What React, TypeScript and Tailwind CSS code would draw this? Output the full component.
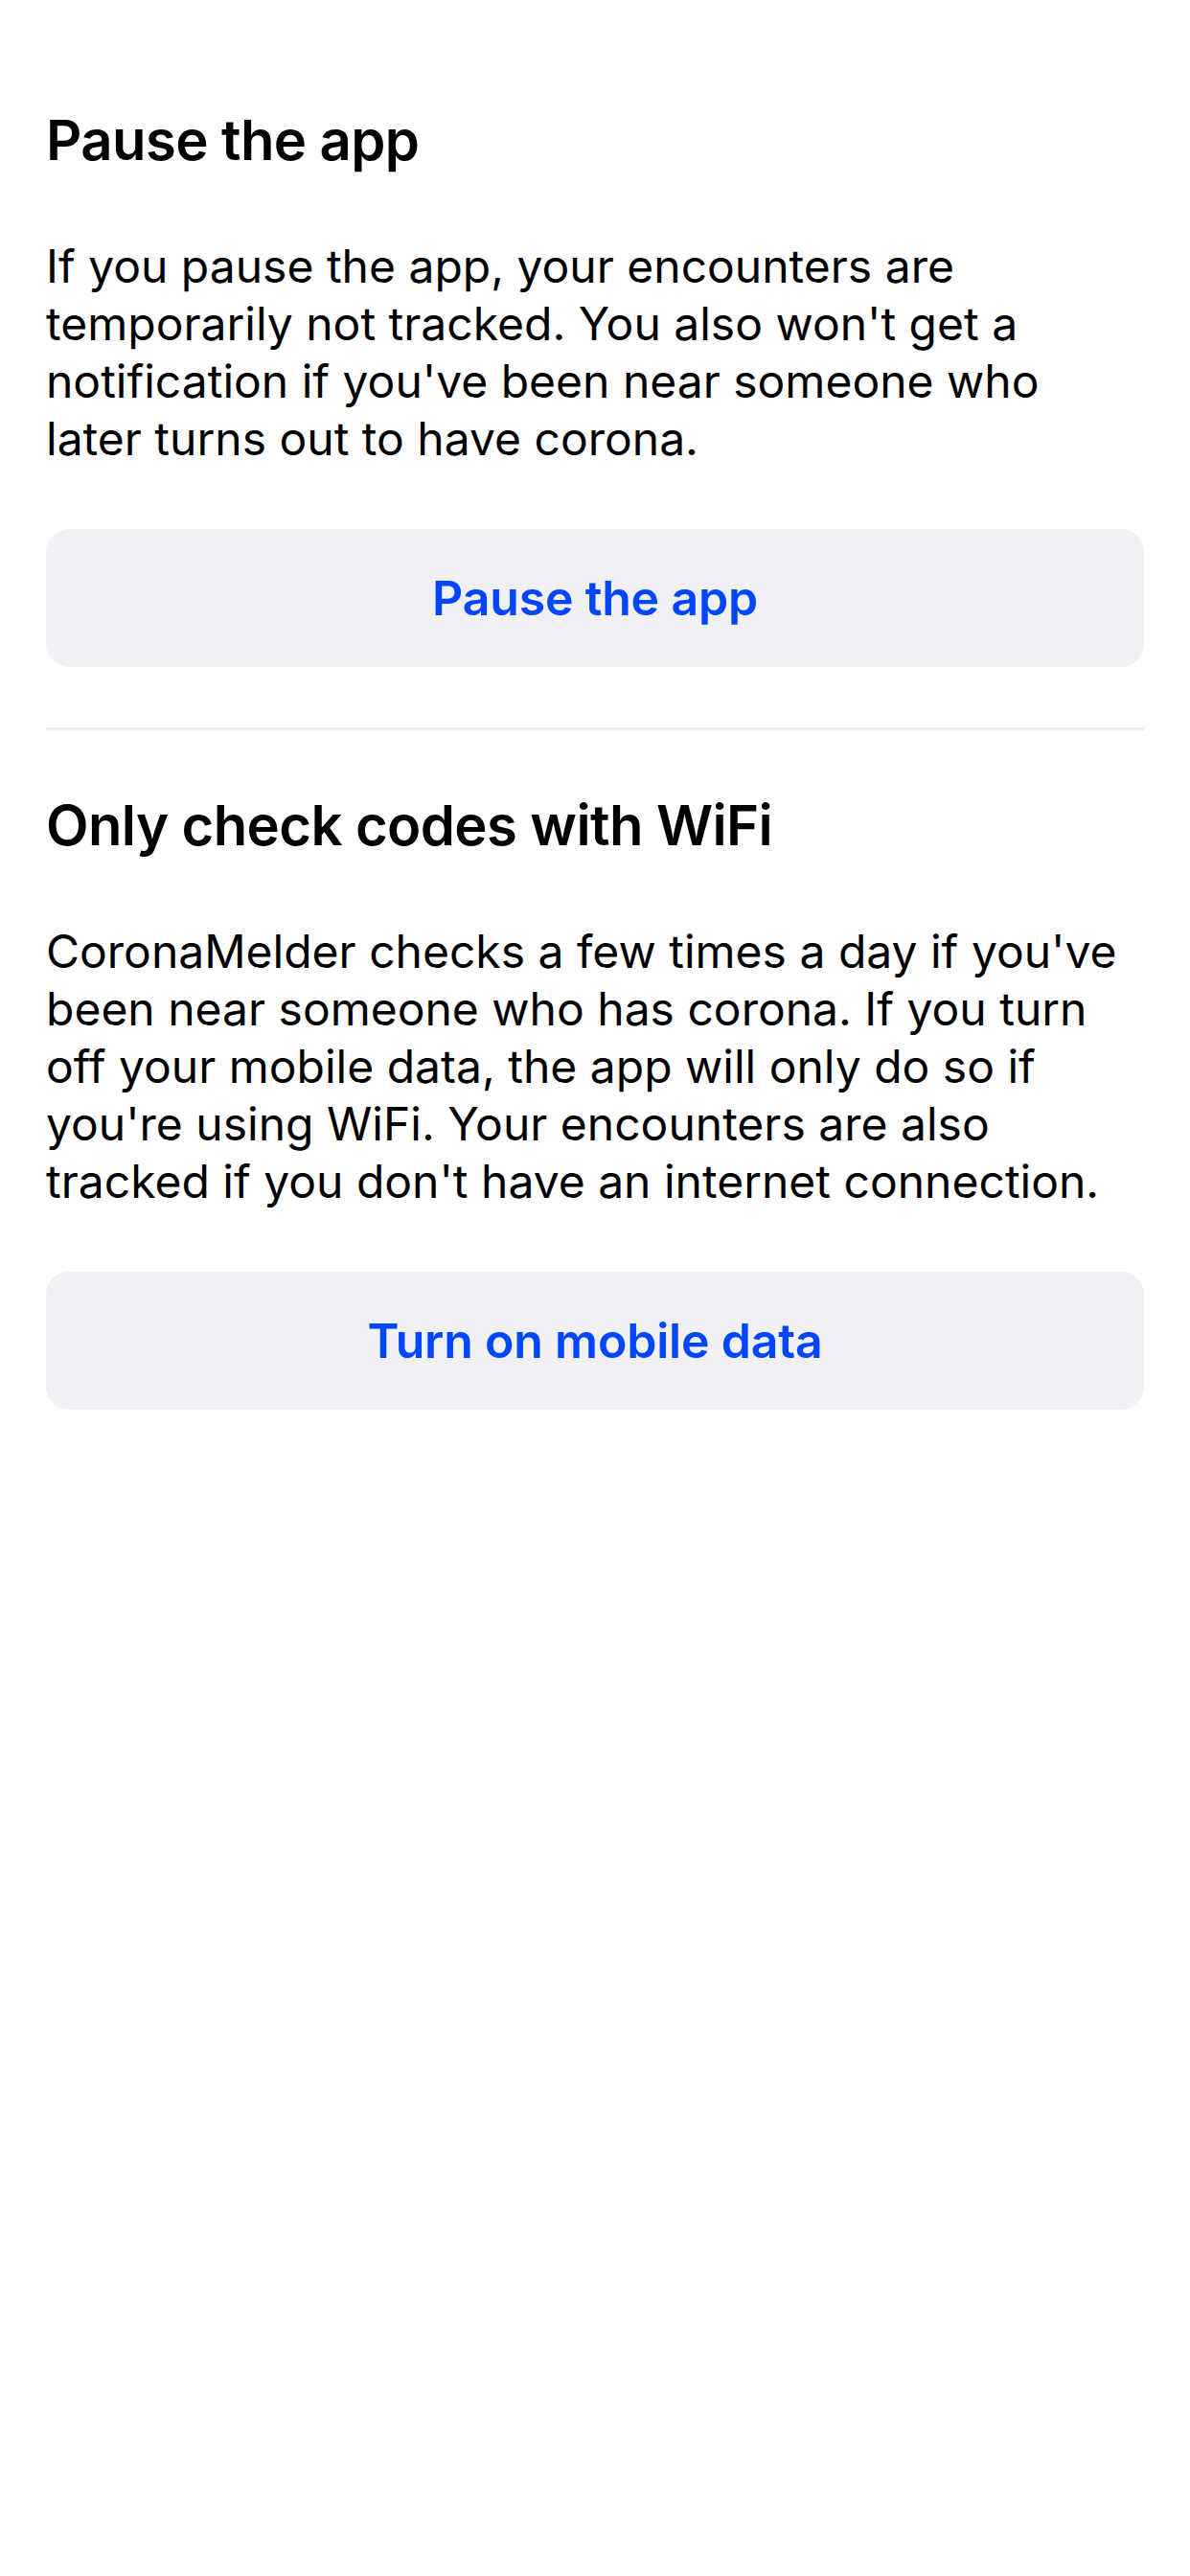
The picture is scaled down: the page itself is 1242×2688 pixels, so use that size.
const sections = [
  {
    title: "Pause the app",
    body: "If you pause the app, your encounters are temporarily not tracked. You also won't get a notification if you've been near someone who later turns out to have corona.",
    action: "Pause the app",
  },
  {
    title: "Only check codes with WiFi",
    body: "CoronaMelder checks a few times a day if you've been near someone who has corona. If you turn off your mobile data, the app will only do so if you're using WiFi. Your encounters are also tracked if you don't have an internet connection.",
    action: "Turn on mobile data",
  },
];

export default function App() {
  return (
    <div
      className="w-[1242px] min-h-[2688px] bg-white px-[48px] pt-[111px] text-black"
      style={{ fontFamily: "Inter, 'Noto Sans', sans-serif" }}
    >
      {sections.map((s, i) => (
        <div key={s.title}>
          {/* divider between sections */}
          {i > 0 && <div className="h-[3px] bg-[#ececee] mt-[63px] mb-[64px]" />}

          <h2 className="text-[58px] leading-[70px] font-semibold tracking-[-0.6px]">
            {s.title}
          </h2>

          <p className="mt-[67px] text-[48px] leading-[60px] tracking-[0px]">
            {s.body}
          </p>

          <button className="mt-[64px] w-full h-[144px] rounded-[24px] bg-[#f0f0f5] flex items-center justify-center text-[50px] font-semibold text-[#0046ff] tracking-[-0.2px]">
            {s.action}
          </button>
        </div>
      ))}
    </div>
  );
}
